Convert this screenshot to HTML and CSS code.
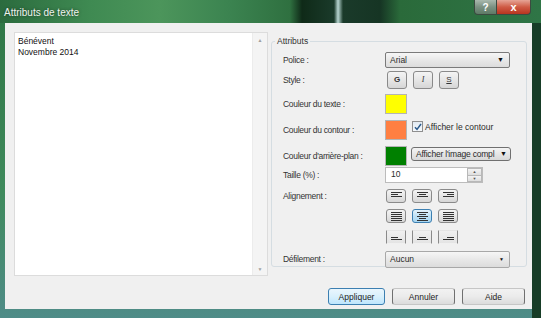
FILE: index.html
```html
<!DOCTYPE html>
<html lang="fr">
<head>
    <meta charset="UTF-8">
    <title>Attributs de texte</title>
    <link rel="stylesheet" href="styles.css">
</head>
<body>
    <div class="window">
        <div class="titlebar">
            <span class="title">Attributs de texte</span>
            <div class="caption-buttons">
                <span class="cap-btn help">?</span>
                <span class="cap-btn close">x</span>
            </div>
        </div>
        <div class="client">
            <div class="main">
                <div class="textbox">
                    <div class="text">Bénévent<br>Novembre 2014</div>
                    <div class="scrollbar">
                        <span class="arrow">&#9650;</span>
                        <span class="arrow">&#9660;</span>
                    </div>
                </div>
                <fieldset class="group">
                    <legend>Attributs</legend>
                    <div class="row r-police">
                        <label>Police :</label>
                        <div class="select">Arial<span class="drop">&#9660;</span></div>
                    </div>
                    <div class="row r-style">
                        <label>Style :</label>
                        <div class="btn-set">
                            <span class="tool-btn bold">G</span>
                            <span class="tool-btn italic">I</span>
                            <span class="tool-btn under">S</span>
                        </div>
                    </div>
                    <div class="row r-color">
                        <label>Couleur du texte :</label>
                        <span class="swatch yellow"></span>
                    </div>
                    <div class="row r-outline">
                        <label>Couleur du contour :</label>
                        <span class="swatch orange"></span>
                        <span class="check">
                            <svg width="8" height="8" viewBox="0 0 8 8"><path d="M1 4.2 L3 6.4 L7 1" fill="none" stroke="#2a5a8c" stroke-width="1.5"/></svg>
                        </span>
                        <span class="check-label">Afficher le contour</span>
                    </div>
                    <div class="row r-back">
                        <label>Couleur d'arrière-plan :</label>
                        <span class="swatch green"></span>
                        <span class="menu-btn"><span class="menu-text">Afficher l'image compl</span><span class="drop">&#9660;</span></span>
                    </div>
                    <div class="row r-size">
                        <label>Taille (%) :</label>
                        <div class="spin">
                            <span class="spin-value">10</span>
                            <span class="spin-arrows">
                                <span class="spin-up">&#9650;</span>
                                <span class="spin-down">&#9660;</span>
                            </span>
                        </div>
                    </div>
                    <div class="row r-align">
                        <label class="align-label">Alignement :</label>
                        <div class="align-grid">
                            <span class="align-btn"><svg width="11" height="9" viewBox="0 0 11 9"><path d="M0 .5H11M0 2.5H7M0 4.5H11" stroke="#333"/></svg></span>
                            <span class="align-btn"><svg width="11" height="9" viewBox="0 0 11 9"><path d="M0 .5H11M2 2.5H9M0 4.5H11" stroke="#333"/></svg></span>
                            <span class="align-btn"><svg width="11" height="9" viewBox="0 0 11 9"><path d="M0 .5H11M4 2.5H11M0 4.5H11" stroke="#333"/></svg></span>
                            <span class="align-btn mid"><svg width="11" height="9" viewBox="0 0 11 9"><path d="M0 .5H11M0 2.5H11M0 4.5H11M0 6.5H11M0 8.5H11" stroke="#333"/></svg></span>
                            <span class="align-btn mid selected"><svg width="11" height="9" viewBox="0 0 11 9"><path d="M0 .5H11M2 2.5H9M0 4.5H11M2 6.5H9M0 8.5H11" stroke="#333"/></svg></span>
                            <span class="align-btn mid"><svg width="11" height="9" viewBox="0 0 11 9"><path d="M0 .5H11M0 2.5H11M0 4.5H11M0 6.5H11M0 8.5H11" stroke="#333"/></svg></span>
                            <span class="align-btn low"><svg width="11" height="9" viewBox="0 0 11 9"><path d="M0 4.5H7M0 6.5H11" stroke="#333"/></svg></span>
                            <span class="align-btn low"><svg width="11" height="9" viewBox="0 0 11 9"><path d="M2 4.5H9M0 6.5H11" stroke="#333"/></svg></span>
                            <span class="align-btn low"><svg width="11" height="9" viewBox="0 0 11 9"><path d="M4 4.5H11M0 6.5H11" stroke="#333"/></svg></span>
                        </div>
                    </div>
                    <div class="row r-scroll">
                        <label>Défilement :</label>
                        <div class="select">Aucun<span class="drop small">&#9660;</span></div>
                    </div>
                </fieldset>
            </div>
            <div class="buttons">
                <span class="push default">Appliquer</span>
                <span class="push">Annuler</span>
                <span class="push">Aide</span>
            </div>
        </div>
    </div>
</body>
</html>
```

FILE: styles.css
```css
body {
    margin: 0;
    font-family: "Liberation Sans", Arial, sans-serif;
    font-size: 8.5px;
    color: #2a2a2a;
    background: #1d4a2c;
}
.window {
    width: 541px;
    height: 318px;
    display: flex;
    flex-direction: column;
    background: linear-gradient(to bottom, #2e7544 0%, #3f8a5c 60%, #4f8c88 100%);
    box-shadow: inset -9px 0 0 #173d27;
}
.titlebar {
    height: 23px;
    display: flex;
    align-items: flex-start;
    background: linear-gradient(to right, #2b6b3e 0px, #3f8a52 90px, #4c955b 160px, #3b8350 230px, #2f7040 290px, #0f2a18 302px, #1a3a2a 334px, #b8d6d2 338px, #1a3a2a 343px, #163524 380px, #2a6a3a 400px, #2f7546 541px);
}
.title {
    margin: 7px 0 0 4px;
    font-size: 10px;
    color: #eef3ee;
    text-shadow: 0 0 3px rgba(0, 0, 0, 0.5);
}
.caption-buttons {
    margin-left: auto;
    margin-right: 10px;
    display: flex;
    height: 15px;
}
.cap-btn {
    display: flex;
    align-items: center;
    justify-content: center;
    color: #fff;
    font-weight: bold;
    border: 1px solid #3c4a40;
    border-top: none;
}
.help {
    width: 21px;
    font-size: 10px;
    border-radius: 0 0 0 4px;
    background: linear-gradient(to bottom, #a9b8ad, #7b9182 50%, #5e7a66);
}
.close {
    width: 33px;
    font-size: 11px;
    border-left: none;
    border-radius: 0 0 4px 0;
    background: linear-gradient(to bottom, #e6a596, #cf5b45 50%, #b8341f);
}
.client {
    flex: 1;
    margin: 0 9px 9px 5px;
    padding: 9px 5px 0 9px;
    background: #f0f0f0;
    display: flex;
    flex-direction: column;
}
.main {
    display: flex;
    align-items: flex-start;
    gap: 3px;
}
.textbox {
    width: 252px;
    height: 242px;
    border: 1px solid #dcdcdc;
    background: #fff;
    display: flex;
}
.text {
    flex: 1;
    padding: 3px 0 0 3px;
    line-height: 11px;
    font-size: 8.5px;
    color: #111;
}
.scrollbar {
    width: 14px;
    background: #f4f4f4;
    border-left: 1px solid #ececec;
    display: flex;
    flex-direction: column;
    justify-content: space-between;
    align-items: center;
    padding: 4px 0 3px;
}
.arrow {
    font-size: 5px;
    color: #a0a0a0;
}
.group {
    margin: 4px 0 0 0;
    width: 229px;
    height: 225px;
    padding: 0 14px 4px 11px;
    border: 1px solid #d5dde2;
    border-radius: 3px;
}
.group legend {
    padding: 0 2px;
    margin-left: -8px;
    line-height: 10px;
    color: #333;
}
.row {
    display: flex;
    align-items: center;
}
.row label {
    width: 102px;
    flex: none;
    letter-spacing: -0.3px;
    color: #333;
}
.r-police { margin-top: 6px; height: 15px; }
.r-style { margin-top: 4px; height: 17px; }
.r-color { margin-top: 6px; height: 20px; }
.r-outline { margin-top: 6px; height: 19px; }
.r-back { margin-top: 8px; height: 18px; }
.r-size { margin-top: 2px; height: 16px; }
.r-align { margin-top: 6px; align-items: flex-start; }
.r-scroll { margin-top: 7px; height: 16px; }
.align-label {
    margin-top: 2px;
}
.select {
    width: 119px;
    height: 13px;
    padding-left: 4px;
    border: 1px solid #8e8f8f;
    border-radius: 2px;
    background: linear-gradient(to bottom, #f6f6f6, #e8e8e8 50%, #dcdcdc);
    display: flex;
    align-items: center;
}
.r-police .select {
    height: 14px;
    border-color: #7a7a7a;
}
.r-scroll .select {
    height: 15px;
    border-color: #a8a8a8;
}
.drop {
    margin-left: auto;
    margin-right: 5px;
    font-size: 7px;
    color: #111;
}
.drop.small {
    font-size: 5px;
}
.btn-set {
    display: flex;
    gap: 6px;
    padding-left: 2px;
}
.tool-btn {
    width: 18px;
    height: 16px;
    border: 1px solid #8a8a8a;
    border-radius: 3px;
    background: linear-gradient(to bottom, #f4f4f4, #e6e6e6 50%, #d6d6d6);
    display: flex;
    align-items: center;
    justify-content: center;
    font-size: 8px;
    color: #333;
}
.tool-btn.bold { font-weight: bold; }
.tool-btn.italic { font-style: italic; font-family: "Liberation Serif", serif; }
.tool-btn.under { text-decoration: underline; }
.swatch {
    width: 20px;
    height: 18px;
    border: 1px solid #b4b4b4;
    box-sizing: content-box;
    flex: none;
}
.yellow { background: #ffff00; }
.orange { background: #ff7f42; }
.green { background: #008000; }
.check {
    width: 9px;
    height: 9px;
    margin: 0 2px 6px 5px;
    border: 1px solid #8f8f8f;
    background: linear-gradient(to bottom, #e2eaf2, #f6f9fc);
    display: flex;
    align-items: center;
    justify-content: center;
}
.check-label {
    margin-bottom: 6px;
}
.menu-btn {
    width: 94px;
    height: 12px;
    margin: 0 0 5px 4px;
    padding-left: 4px;
    border: 1px solid #707070;
    border-radius: 3px;
    background: linear-gradient(to bottom, #f4f4f4, #e6e6e6 50%, #d8d8d8);
    display: flex;
    align-items: center;
    white-space: nowrap;
    overflow: hidden;
}
.menu-text {
    letter-spacing: -0.2px;
}
.menu-btn .drop {
    margin-right: 3px;
}
.spin {
    width: 96px;
    height: 14px;
    border: 1px solid #bcbcbc;
    background: #fff;
    display: flex;
}
.spin-value {
    padding: 1px 0 0 5px;
    flex: 1;
}
.spin-arrows {
    width: 15px;
    display: flex;
    flex-direction: column;
}
.spin-up, .spin-down {
    flex: 1;
    font-size: 4px;
    color: #555;
    display: flex;
    align-items: center;
    justify-content: center;
    border: 1px solid #b8b8b8;
    background: linear-gradient(to bottom, #f4f4f4, #dedede);
}
.spin-down {
    border-top: none;
}
.align-grid {
    display: grid;
    grid-template-columns: repeat(3, 20px);
    grid-template-rows: 14px 14px 15px;
    column-gap: 6px;
    row-gap: 6px;
    padding-left: 1px;
}
.align-grid .align-btn:nth-child(n+7) {
    margin-top: 1px;
}
.align-btn {
    border: 1px solid #8a8a8a;
    border-radius: 3px;
    background: linear-gradient(to bottom, #f4f4f4, #e6e6e6 50%, #d6d6d6);
    display: flex;
    justify-content: center;
    align-items: flex-start;
    padding-top: 2px;
}
.align-btn.mid {
    align-items: center;
    padding-top: 0;
}
.align-btn.selected {
    border-color: #3c7fb1;
    background: linear-gradient(to bottom, #e4f3fc, #bfe2f6 50%, #a7d6f2);
}
.align-btn.low {
    border-top-color: transparent;
    border-bottom-color: transparent;
    border-radius: 0;
    background: linear-gradient(to bottom, #f0f0f0, #e4e4e4);
    align-items: flex-end;
    padding: 0 0 1px;
}
.buttons {
    margin-top: 12px;
    margin-right: 2px;
    display: flex;
    justify-content: flex-end;
    gap: 7px;
}
.push {
    width: 61px;
    height: 15px;
    border: 1px solid #707070;
    border-top-color: #c6c6c6;
    border-bottom-color: #c6c6c6;
    border-radius: 3px;
    background: linear-gradient(to bottom, #f2f2f2, #ebebeb 50%, #dcdcdc);
    display: flex;
    align-items: center;
    justify-content: center;
    color: #222;
}
.push.default {
    width: 55px;
    border-color: #3c7fb1;
    background: linear-gradient(to bottom, #eaf6fd, #d9f0fc 50%, #bee6fd);
}
```
